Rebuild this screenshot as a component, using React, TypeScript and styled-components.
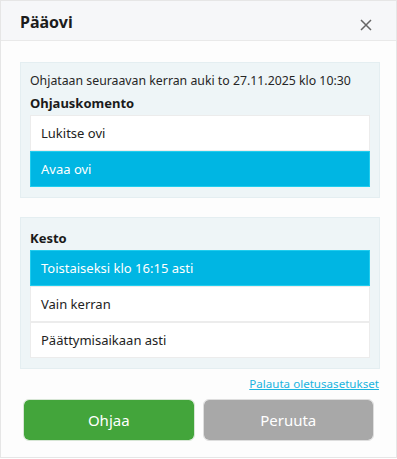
import styled, { createGlobalStyle } from 'styled-components';

const GlobalStyle = createGlobalStyle`
  body {
    margin: 0;
    font-family: 'Noto Sans', 'Open Sans', sans-serif;
    background: #ffffff;
  }
`;

const Dialog = styled.div`
  width: 397px;
  height: 458px;
  box-sizing: border-box;
  border: 1px solid #e6e6e6;
  background: #fdfdfd;
  display: flex;
  flex-direction: column;
`;

const Header = styled.div`
  height: 40px;
  box-sizing: border-box;
  border-bottom: 1px solid #e9e9e9;
  background: #f6f7f9;
  display: flex;
  align-items: center;
  justify-content: space-between;
  padding: 0 22px 0 19px;
`;

const Title = styled.h1`
  margin: 0;
  font-size: 16px;
  font-weight: 700;
  color: #1c1c1c;
  position: relative;
  top: 1px;
`;

const CloseButton = styled.button`
  border: none;
  background: none;
  padding: 0;
  width: 16px;
  height: 16px;
  display: flex;
  align-items: center;
  justify-content: center;
  cursor: pointer;
  position: relative;
  top: 4px;
`;

const Body = styled.div`
  padding: 21px 16px 0 19px;
  display: flex;
  flex-direction: column;
`;

const Panel = styled.section<{ $top?: number }>`
  background: #eef5f7;
  border: 1px solid #e4eef1;
  padding: 9px 9px 10px 9px;
  margin-top: ${(p) => p.$top ?? 0}px;
`;

const Info = styled.div`
  font-size: 12.3px;
  line-height: 18px;
  color: #262626;
`;

const Label = styled.div<{ $gap: number }>`
  font-size: 13px;
  font-weight: 700;
  line-height: 18px;
  color: #1a1a1a;
  margin: ${(p) => p.$gap}px 0 3px;
`;

const List = styled.div`
  display: flex;
  flex-direction: column;
`;

const Option = styled.div<{ $active?: boolean }>`
  height: 36px;
  box-sizing: border-box;
  display: flex;
  align-items: center;
  padding: 0 10px;
  font-size: 13px;
  border: 1px solid ${(p) => (p.$active ? '#21cdee' : '#ececec')};
  background: ${(p) => (p.$active ? '#00b6e3' : '#ffffff')};
  color: ${(p) => (p.$active ? '#ffffff' : '#222222')};
`;

const ResetLink = styled.a`
  align-self: flex-end;
  margin-top: 6px;
  margin-right: 1px;
  font-size: 11.6px;
  line-height: 18px;
  color: #19b4df;
  text-decoration: underline;
  cursor: pointer;
`;

const Actions = styled.div`
  display: grid;
  grid-template-columns: 1fr 1fr;
  gap: 8px;
  padding: 6px 22px 0 22px;
`;

const Button = styled.button<{ $tone: 'primary' | 'muted' }>`
  height: 42px;
  border-radius: 6px;
  border: 1px solid ${(p) => (p.$tone === 'primary' ? '#d7e6d5' : '#dedede')};
  background: ${(p) => (p.$tone === 'primary' ? '#43a53b' : '#a8a8a8')};
  background-clip: padding-box;
  color: #ffffff;
  font-family: inherit;
  font-size: 15px;
  cursor: pointer;
`;

const commands = ['Lukitse ovi', 'Avaa ovi'];
const durations = ['Toistaiseksi klo 16:15 asti', 'Vain kerran', 'Päättymisaikaan asti'];

export default function App() {
  return (
    <>
      <GlobalStyle />
      <Dialog>
        <Header>
          <Title>Pääovi</Title>
          <CloseButton aria-label="Sulje">
            <svg width="12" height="12" viewBox="0 0 12 12">
              <path d="M1 1 L11 11 M11 1 L1 11" stroke="#666" strokeWidth="1.5" />
            </svg>
          </CloseButton>
        </Header>
        <Body>
          <Panel>
            <Info>Ohjataan seuraavan kerran auki to 27.11.2025 klo 10:30</Info>
            <Label $gap={4}>Ohjauskomento</Label>
            <List>
              {commands.map((c) => (
                <Option key={c} $active={c === 'Avaa ovi'}>
                  {c}
                </Option>
              ))}
            </List>
          </Panel>
          <Panel $top={19}>
            <Label $gap={2}>Kesto</Label>
            <List>
              {durations.map((d, i) => (
                <Option key={d} $active={i === 0}>
                  {d}
                </Option>
              ))}
            </List>
          </Panel>
          <ResetLink>Palauta oletusasetukset</ResetLink>
        </Body>
        <Actions>
          <Button $tone="primary">Ohjaa</Button>
          <Button $tone="muted">Peruuta</Button>
        </Actions>
      </Dialog>
    </>
  );
}
